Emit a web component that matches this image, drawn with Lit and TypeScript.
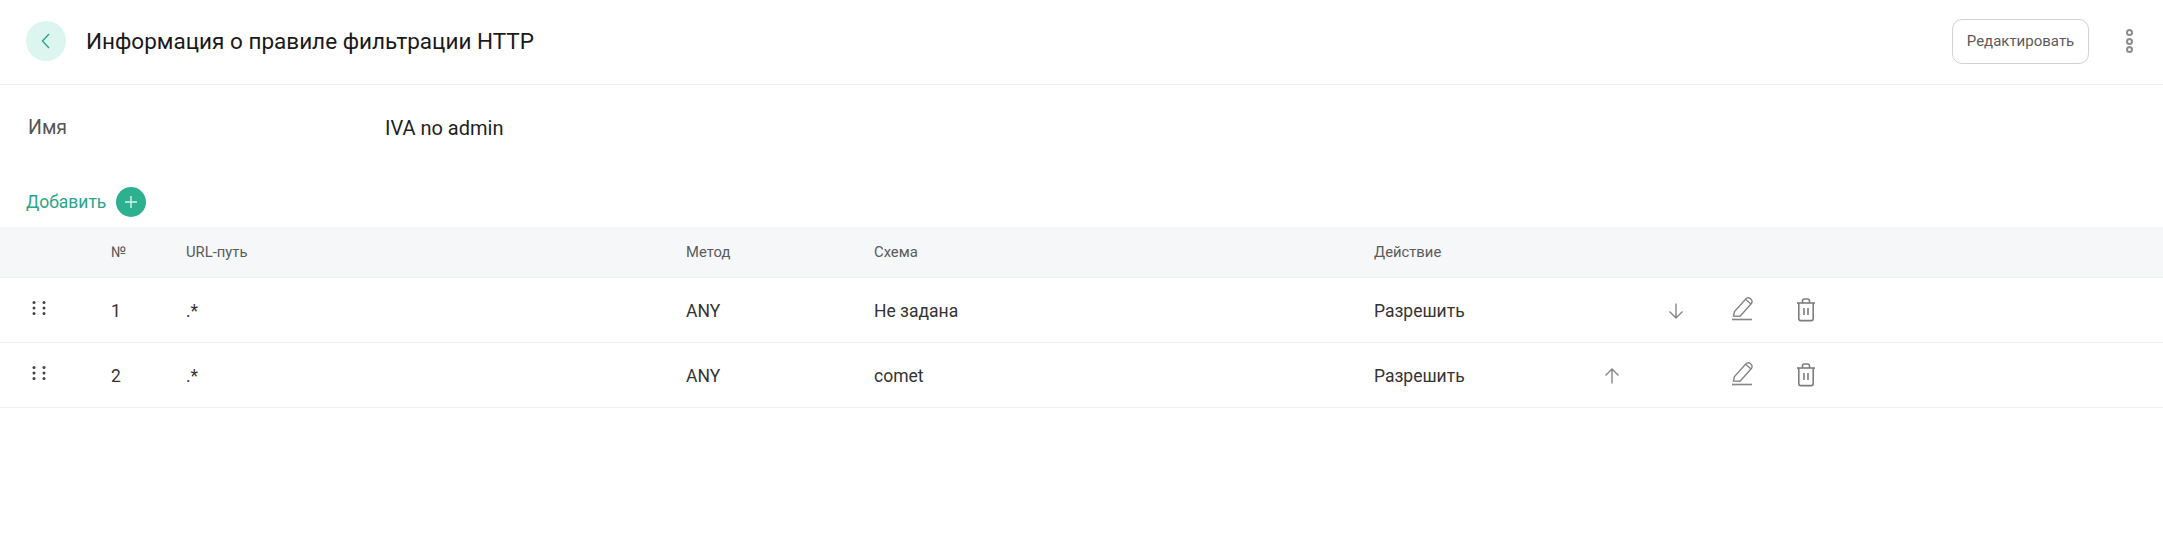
import { LitElement, html, css, svg } from "lit";
import { customElement } from "lit/decorators.js";

const arrow = (up: boolean) => html`<svg class="icon" width="24" height="24" viewBox="0 0 24 24" fill="none" stroke="#858585" stroke-width="1.400">
  ${up ? svg`<path d="M12 19.500V5M5.500 11.500 12 5l6.500 6.500"/>` : svg`<path d="M12 4.500V19M5.500 12.500 12 19l6.500-6.500"/>`}
</svg>`;
const edit = html`<svg class="icon" width="24" height="26" viewBox="0 0 24 26" fill="none" stroke="#858585" stroke-width="1.400">
  <path d="M3.500 20 4.500 15.500 15.500 3.200C17 1.600 19.200 1.600 20.800 3 22.200 4.400 22.300 6.500 21 8L10 20.200 3.500 20Z"/>
  <path d="M15.500 3.200 21 8"/>
  <path d="M2 23.500H22" stroke-width="1.600"/>
</svg>`;
const trash = html`<svg class="icon" width="20" height="24" viewBox="0 0 20 24" fill="none" stroke="#7d7d7d" stroke-width="1.600">
  <path d="M1 5H19"/>
  <path d="M6.500 5V3C6.500 1.800 7.300 1 8.500 1H11.500C12.700 1 13.500 1.800 13.500 3V5"/>
  <path d="M2.800 5V20.500C2.800 21.800 3.600 22.600 4.800 22.600H15.200C16.400 22.600 17.200 21.800 17.200 20.500V5"/>
  <path d="M8 10V17M12 10V17"/>
</svg>`;
const grip = html`<svg class="grip" width="14" height="16" viewBox="0 0 14 16" fill="#444">
  ${[2.500, 8, 13.500].map((y) => [2, 12].map((x) => svg`<circle cx=${x} cy=${y} r="1.500"/>`))}
</svg>`;

const rows = [
  { n: "1", path: ".*", method: "ANY", scheme: "Не задана", action: "Разрешить", up: false, down: true },
  { n: "2", path: ".*", method: "ANY", scheme: "comet", action: "Разрешить", up: true, down: false },
];

@customElement("app-root")
export class AppRoot extends LitElement {
  static styles = css`
    :host { display: block; font-family: Roboto, "Noto Sans", sans-serif; color: #2b2b2b; background: #fff; height: 554px; }
    .top { display: flex; align-items: center; height: 85px; padding: 0 20px 2px 26px; box-sizing: border-box; border-bottom: 1px solid #f1f1f1; }
    .back { width: 40px; height: 40px; border-radius: 50%; background: #dcf6ef; display: flex; align-items: center; justify-content: center; }
    h1 { margin: 0 0 0 20px; font-size: 22.500px; font-weight: 400; color: #1a1a1a; flex: 1; }
    .btn { width: 137px; height: 45px; box-sizing: border-box; border: 1px solid #d2d2d2; border-radius: 10px; display: flex; align-items: center; justify-content: center; font-size: 15px; color: #5b5b5b; }
    .more { margin-left: 37px; margin-right: 10px; display: flex; flex-direction: column; gap: 1.500px; }
    .more i { width: 7px; height: 7px; box-sizing: border-box; border: 2px solid #8c8c8c; border-radius: 50%; display: block; }
    .field { display: flex; padding: 21px 0 0 28px; height: 43px; align-items: center; font-size: 19.500px; }
    .field .k { width: 358px; color: #555; }
    .field .v { color: #1f1f1f; font-size: 20px; margin-left: -1px; }
    .add { display: flex; align-items: center; gap: 10px; padding: 38px 0 0 26px; height: 30px; font-size: 17.500px; color: #2ba58a; }
    .plus { width: 30px; height: 30px; border-radius: 50%; background: #2cb08f; display: flex; align-items: center; justify-content: center; }
    .grid { display: grid; grid-template-columns: 111px 75px 500px 188px 500px 206px 64px 64px 68px 64px 1fr; align-items: center; }
    .head { margin-top: 10px; height: 51px; background: #f6f7f9; border-bottom: 1px solid #efefef; box-sizing: border-box; font-size: 14.800px; color: #5b5b5b; }
    .row { height: 65px; padding-top: 2px; border-bottom: 1px solid #efefef; box-sizing: border-box; font-size: 17.500px; color: #333; }
    .cell-icon { display: flex; justify-content: center; align-items: center; }
    .grip { display: block; margin: -7px 0 0 32px; }
    .icon { display: block; }
    .adj { margin-top: -5px; }
    .trash { margin-top: -3px; padding-right: 5px; }
    .num { color: #333; }
  `;

  render() {
    return html`
      <div class="top">
        <div class="back">
          <svg width="16" height="18" viewBox="0 0 16 18" fill="none" stroke="#2ba58a" stroke-width="1.400"><path d="M11 2 4.500 9 11 16"/></svg>
        </div>
        <h1>Информация о правиле фильтрации HTTP</h1>
        <div class="btn">Редактировать</div>
        <div class="more"><i></i><i></i><i></i></div>
      </div>
      <div class="field"><span class="k">Имя</span><span class="v">IVA no admin</span></div>
      <div class="add">
        <span>Добавить</span>
        <span class="plus"><svg width="14" height="14" viewBox="0 0 14 14" stroke="#d8f3ec" stroke-width="1.400"><path d="M7 1V13M1 7H13"/></svg></span>
      </div>
      <div class="grid head">
        <span></span><span>№</span><span>URL-путь</span><span>Метод</span><span>Схема</span><span>Действие</span>
      </div>
      ${rows.map((r) => html`
        <div class="grid row">
          <span>${grip}</span>
          <span class="num">${r.n}</span>
          <span>${r.path}</span>
          <span>${r.method}</span>
          <span>${r.scheme}</span>
          <span>${r.action}</span>
          <span class="cell-icon">${r.up ? arrow(true) : ""}</span>
          <span class="cell-icon">${r.down ? arrow(false) : ""}</span>
          <span class="cell-icon adj">${edit}</span>
          <span class="cell-icon trash">${trash}</span>
          <span></span>
        </div>
      `)}
    `;
  }
}
